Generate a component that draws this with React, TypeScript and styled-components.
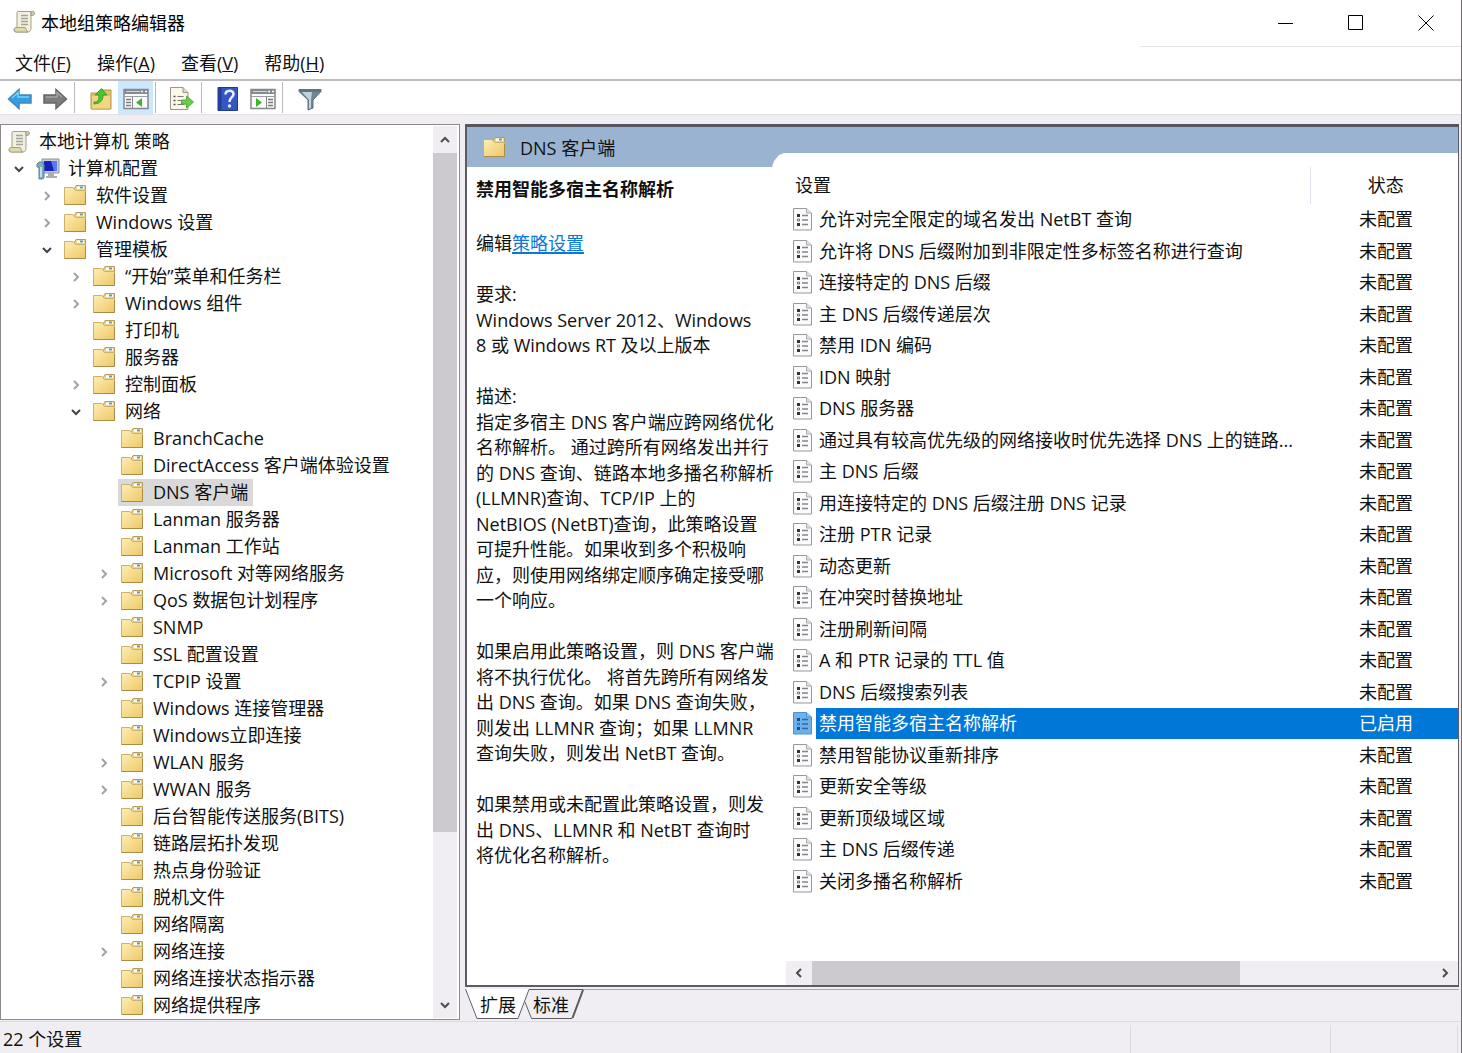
import React from 'react';
import styled, { createGlobalStyle, css } from 'styled-components';

const GlobalStyle = createGlobalStyle`
  * { box-sizing: border-box; }
  html, body { margin: 0; padding: 0; }
  body, button {
    font-family: "Open Sans", "Noto Sans CJK SC", sans-serif;
    font-size: 18px;
    color: #111;
  }
  button { background: none; border: 0; padding: 0; margin: 0; text-align: left; }
`;

const Window = styled.div`
  display: flex;
  flex-direction: column;
  height: 100vh;
  background: #f0eef2;
  border-right: 1px solid #6d6b70;
  overflow: hidden;
  white-space: nowrap;
`;

const TitleBar = styled.header`
  display: flex;
  flex: none;
  height: 47px;
  padding-left: 12px;
  background: #fff;
`;

const Title = styled.h1`
  display: flex;
  flex: 1;
  align-items: center;
  gap: 5px;
  height: 44px;
  margin: 0;
  font-size: 18px;
  font-weight: 400;
  color: #000;
`;

const WindowButtons = styled.div`
  display: flex;
  width: 321px;
  height: 47px;
  justify-content: flex-end;
  border-bottom: 1px solid #e6e6e8;
`;

const WindowButton = styled.button`
  display: flex;
  width: 70px;
  height: 45px;
  align-items: center;
  justify-content: center;
`;

const MenuBar = styled.nav`
  display: flex;
  flex: none;
  gap: 26px;
  height: 34px;
  padding-left: 15px;
  background: #fff;
  border-bottom: 2px solid #bdbdbf;
`;

const MenuItem = styled.button`
  line-height: 32px;
`;

const Toolbar = styled.div`
  display: flex;
  flex: none;
  align-items: center;
  height: 34px;
  padding-left: 2px;
  background: #fff;
  border-bottom: 1px solid #e2e2e4;
`;

const ToolButton = styled.button<{ $active?: boolean }>`
  display: flex;
  width: 35px;
  height: 33px;
  padding-top: 2px;
  align-items: center;
  justify-content: center;
  background: ${(p) => (p.$active ? '#cce8ff' : 'transparent')};
`;

const ToolSeparator = styled.span<{ $after?: number }>`
  width: 1px;
  height: 31px;
  margin: 0 ${(p) => p.$after ?? 8}px 0 2px;
  background: #b9b9bb;
`;

const Workspace = styled.main`
  display: flex;
  flex: 1;
  min-height: 0;
  gap: 5px;
  padding: 9px 2px 1px 0;
`;

const TreePane = styled.section`
  display: flex;
  flex: none;
  width: 460px;
  border: 1px solid #8b898e;
  background: #fff;
`;

const Tree = styled.ul`
  flex: 1;
  min-width: 0;
  margin: 0;
  padding: 3px 0 0;
  list-style: none;
  overflow: hidden;
`;

const indents = [3, 6, 34, 63, 91];

const TreeRow = styled.li<{ $level: number }>`
  display: flex;
  align-items: center;
  height: 27px;
  padding-left: ${(p) => indents[p.$level]}px;
`;

const Toggle = styled.button`
  display: flex;
  width: 24px;
  height: 27px;
  margin-right: 2px;
  align-items: center;
  justify-content: center;
`;

const ToggleSpace = styled.span`
  width: 26px;
`;

const TreeLabel = styled.button<{ $selected?: boolean }>`
  display: flex;
  align-items: center;
  gap: 8px;
  height: 27px;
  padding: 0 5px 0 3px;
  line-height: 27px;
  background: ${(p) => (p.$selected ? '#d9d9d9' : 'transparent')};
`;

const IconSlot = styled.span`
  display: flex;
  flex: none;
  width: 24px;
  align-items: center;
`;

const VScroll = styled.div`
  display: flex;
  flex-direction: column;
  width: 24px;
  margin: 1px 2px 1px 0;
  background: #f0eef2;
`;

const HScroll = styled.div`
  display: flex;
  flex: none;
  height: 24px;
  margin-left: 14px;
  background: #f0eef2;
`;

const ScrollButton = styled.button`
  display: flex;
  flex: none;
  width: 26px;
  height: 27px;
  align-items: center;
  justify-content: center;

  ${HScroll} & { height: 24px; }
  ${VScroll} & { width: 24px; }
`;

const Track = styled.div<{ $vertical?: boolean }>`
  display: flex;
  flex: 1;
  flex-direction: ${(p) => (p.$vertical ? 'column' : 'row')};
`;

const Thumb = styled.div<{ $share: number }>`
  flex: 0 0 ${(p) => p.$share}%;
  background: #cdcacf;
`;

const RightSide = styled.section`
  display: flex;
  flex: 1;
  flex-direction: column;
  min-width: 0;
`;

const DetailPane = styled.div`
  display: grid;
  flex: 1;
  min-height: 0;
  grid-template-columns: 305px minmax(0, 1fr);
  border: 2px solid #5d5b66;
  border-top: 3px solid #55555c;
  border-right-width: 1px;
  background: #fff;
`;

const Description = styled.article`
  min-width: 0;
`;

const PaneHeader = styled.header`
  display: flex;
  align-items: center;
  gap: 14px;
  height: 40px;
  padding-left: 16px;
  background: #99b3d1;
`;

const DescriptionBody = styled.div`
  padding: 9px 0 0 9px;
`;

const PolicyName = styled.h2`
  margin: 0 0 29px;
  font-size: 18px;
  line-height: 26px;
`;

const Lines = styled.p`
  margin: 0 0 26px;
  color: #111;
`;

const Line = styled.span`
  display: block;
  height: 25px;
  line-height: 25px;
  &:nth-child(even) { height: 26px; line-height: 26px; }
`;

const Link = styled.a`
  color: #0a78d7;
  text-decoration: underline;
  text-decoration-thickness: 2px;
  text-underline-offset: 2px;
`;

const ListSide = styled.div`
  display: flex;
  flex-direction: column;
  min-width: 0;
`;

const ListTop = styled.div`
  flex: none;
  height: 40px;
  border-top: 26px solid #99b3d1;
  line-height: 0;
`;

const TableArea = styled.div`
  flex: 1;
  min-height: 0;
  overflow: hidden;
`;

const Table = styled.table`
  width: 100%;
  table-layout: fixed;
  border-collapse: collapse;
`;

const HeadCell = styled.th<{ $status?: boolean }>`
  height: 37px;
  padding: 0 0 0 23px;
  font-weight: 400;
  line-height: 37px;
  text-align: left;
  ${(p) =>
    p.$status &&
    css`
      width: 148px;
      padding-left: 3px;
      text-align: center;
      border-left: 1px solid #e3e6f0;
    `}
`;

const rowText = css`
  height: 31px;
  padding: 0;
  line-height: 31px;
  tr:nth-child(even) > & { height: 32px; }
`;

const NameCell = styled.td`
  ${rowText}
  padding-left: 21px;
`;

const StatusCell = styled.td<{ $selected?: boolean }>`
  ${rowText}
  padding-left: 4px;
  text-align: center;
  color: ${(p) => (p.$selected ? '#fff' : '#111')};
  background: ${(p) => (p.$selected ? '#0078d7' : 'transparent')};
`;

const PolicyButton = styled.button<{ $selected?: boolean }>`
  display: flex;
  width: 100%;
  align-items: center;
  gap: 3px;
  line-height: 31px;
  color: ${(p) => (p.$selected ? '#fff' : '#111')};
`;

const PolicyText = styled.span<{ $selected?: boolean }>`
  flex: 1;
  min-width: 0;
  padding-left: 3px;
  overflow: hidden;
  background: ${(p) => (p.$selected ? '#0078d7' : 'transparent')};
`;

const Tabs = styled.div`
  display: flex;
  flex: none;
  height: 31px;
  margin-top: 2px;
  border-top: 1px solid #a9a7ac;
`;

const Tab = styled.button<{ $second?: boolean }>`
  position: relative;
  width: ${(p) => (p.$second ? 59 : 64)}px;
  height: 30px;
  margin-left: ${(p) => (p.$second ? -4 : 0)}px;
  line-height: 30px;
  padding-left: ${(p) => (p.$second ? 8 : 15)}px;
`;

const TabShape = styled.svg`
  position: absolute;
  top: -1px;
  left: 0;
`;

const TabText = styled.span`
  position: relative;
`;

const StatusBar = styled.footer`
  display: flex;
  flex: none;
  height: 32px;
  padding-right: 2px;
  border-top: 1px solid #dcdadf;
`;

const StatusText = styled.span`
  flex: 1;
  padding-left: 3px;
  line-height: 34px;
`;

const StatusPanel = styled.span<{ $width: number }>`
  width: ${(p) => p.$width}px;
  margin-top: 3px;
  border-left: 1px solid #dbd9de;
`;

const ScrollIcon = () => (
  <svg width="24" height="24" viewBox="0 0 24 24" aria-hidden="true">
    <path d="M6 1.5h13v16c0 3-1 4.500-3 4.500H4c-3 0-3-4.500 1-4.500V4c0-1.500 0-2.500 1-2.500z" fill="#f3f0de" stroke="#a19e8c" />
    <path d="M19 5.500V3c0-2.500 3.500-2 3.500.500 0 1.500-1.500 2-3.500 2z" fill="#cfcab0" stroke="#9a9784" />
    <path d="M2.500 18.500c0-1 1-1 2-1H13c1.500 0 1 4.500 3 4.500H4.500c-2 0-2-2-2-3.500z" fill="#e0d9ac" stroke="#a19e8c" />
    <path d="M9 5.500h7M9 8.500h7M9 11.500h7M9 14.500h7" stroke="#a3a39c" strokeWidth="1.5" />
  </svg>
);

const FolderIcon = () => (
  <svg width="23" height="21" viewBox="0 0 23 21" aria-hidden="true">
    <defs>
      <linearGradient id="folderFill" x1="0" y1="0" x2="1" y2="1">
        <stop offset="0" stopColor="#fdeeb5" />
        <stop offset="1" stopColor="#eec766" />
      </linearGradient>
    </defs>
    <path d="M10 4l2-3.5h9.5V19H10z" fill="#e9d591" stroke="#b99b53" />
    <path d="M13 1.5h7V4h-7z" fill="#fff" />
    <path d="M16 1.5h3v2h-3z" fill="#5d9cb2" />
    <path d="M.5 2.5H9l2.5 3h10v14H.5z" fill="url(#folderFill)" stroke="#cdb06a" />
    <path d="M.5 19.5h21V7" fill="none" stroke="#a98c48" />
  </svg>
);

const ComputerIcon = () => (
  <svg width="24" height="22" viewBox="0 0 24 22" aria-hidden="true">
    <path d="M6 1h17v14H6z" fill="#c8ccd4" stroke="#8d929c" />
    <path d="M8 3h13v10H8z" fill="#1420c4" />
    <path d="M15 3h6v10h-3z" fill="#5a78ec" />
    <path d="M12 15h6v3h3v2H10v-2h2z" fill="#a9adb5" />
    <path d="M1 6l2-2h4l1 3v13l-2 1H3V9H1z" fill="#7fa9bf" stroke="#5f7f92" />
    <path d="M5 9v10" stroke="#d7eef8" strokeWidth="1.5" />
  </svg>
);

const Chevron = ({ dir, color = '#4c4c4e' }: { dir: 'up' | 'down' | 'left' | 'right'; color?: string }) => {
  const paths = {
    up: 'M2 8l4-4 4 4',
    down: 'M2 4l4 4 4-4',
    left: 'M8 2L4 6l4 4',
    right: 'M4 2l4 4-4 4',
  };
  return (
    <svg width="12" height="12" viewBox="0 0 12 12" aria-hidden="true">
      <path d={paths[dir]} fill="none" stroke={color} strokeWidth="2" />
    </svg>
  );
};

const PolicyIcon = ({ selected }: { selected?: boolean }) => (
  <svg width="20" height="23" viewBox="0 0 20 23" aria-hidden="true">
    <path d="M.5 .5h13l5 4.5v17H.5z" fill={selected ? '#6db1ea' : '#fbfbfd'} stroke={selected ? '#4b92cf' : '#97979d'} />
    <path d="M13.5 .5V5h5" fill={selected ? '#8ec5f2' : '#e3e3e7'} stroke={selected ? '#4b92cf' : '#a9a9af'} />
    <path d="M4 6h3v3H4zM4 15h3v3H4z" fill={selected ? '#174f85' : '#333'} />
    <path d="M4.5 11h2v2h-2z" fill="none" stroke={selected ? '#2f74b3' : '#777'} />
    <path d="M9 7.5h6M9 12h6M9 16.5h6" stroke={selected ? '#2c6aa5' : '#85858c'} strokeWidth="1.5" />
  </svg>
);

const Arrow = ({ back }: { back?: boolean }) => (
  <svg width="26" height="22" viewBox="0 0 26 22" aria-hidden="true">
    <path
      d={back ? 'M1.5 11L12 1.5V7h12v8H12v5.5z' : 'M24.5 11L14 1.5V7H2v8h12v5.5z'}
      fill={back ? '#2f9fe6' : '#7d7d7f'}
      stroke={back ? '#3f88bb' : '#666'}
      strokeWidth="1.5"
    />
    <path d={back ? 'M5 10l6-5.5V9h11' : 'M4 9h11V4.5L20 9'} fill="none" stroke={back ? '#7fd0fa' : '#a4a4a6'} strokeWidth="1.5" />
  </svg>
);

const FolderUpIcon = () => (
  <svg width="24" height="24" viewBox="0 0 24 24" aria-hidden="true">
    <path d="M2 6h8l2-3h10v19H2z" fill="#e4c46b" stroke="#b3934a" />
    <path d="M2.5 8h19v14h-19z" fill="#f2d683" stroke="#c9ab5f" />
    <path d="M5 15c4 0 5-2 5-7H6l6.500-6.500L18 8h-4c0 6-3 8.500-9 9z" fill="#4dc52f" stroke="#3aa22c" />
  </svg>
);

const PaneIcon = ({ left }: { left?: boolean }) => (
  <svg width="26" height="22" viewBox="0 0 26 22" aria-hidden="true">
    <path d="M1 1.5h24v19H1z" fill="#fafafa" stroke="#85878b" strokeWidth="1.5" />
    <path d="M1 1h24v5H1z" fill="#858990" />
    <path d="M3 3.5h14" stroke="#d4d7da" />
    <path d="M18 3.5h2M22 3.5h2" stroke="#fff" strokeWidth="1.5" />
    <path d="M1 8.5h24" stroke="#9b9ea2" />
    <path d={left ? 'M9.5 9v12' : 'M16.5 9v12'} stroke="#85878b" />
    <path d={left ? 'M3 11.5h5M3 14.5h5M3 17.5h5' : 'M18 11.5h5M18 14.5h5M18 17.5h5'} stroke="#777a80" strokeWidth="1.5" />
    <path d={left ? 'M19 10v9l-6-4.500z' : 'M6 10v9l6-4.500z'} fill="#3fb32c" />
  </svg>
);

const ExportIcon = () => (
  <svg width="26" height="24" viewBox="0 0 26 24" aria-hidden="true">
    <path d="M1.5 .5H14l5 5v17H1.5z" fill="#fbf8e8" stroke="#9a9789" />
    <path d="M14 .5v5h5" fill="#ddd9c5" stroke="#9a9789" />
    <path d="M4.5 9.5h2M4.5 13.5h2M4.5 17.5h2" stroke="#555" strokeWidth="1.5" />
    <path d="M8.5 9.5h6M8.5 13.5h4M8.5 17.5h7" stroke="#777" />
    <path d="M12.5 13h5V9l7 6-7 6v-4h-5z" fill="#6bcb4b" stroke="#4fae3a" />
  </svg>
);

const HelpIcon = () => (
  <svg width="22" height="26" viewBox="0 0 22 26" aria-hidden="true">
    <path d="M1 1.5h19.5v23H1z" fill="#3557c4" stroke="#22397f" />
    <path d="M1 1.5h3.5v23H1z" fill="#233f9e" />
    <path d="M8.5 8.5c0-5 8-5 8-.5 0 3.500-4 3.500-4 8" fill="none" stroke="#e9eefc" strokeWidth="2.5" />
    <circle cx="12.5" cy="20" r="1.7" fill="#e9eefc" />
  </svg>
);

const FilterIcon = () => (
  <svg width="26" height="24" viewBox="0 0 26 24" aria-hidden="true">
    <path d="M2 2.5h22v2L16 13v8l-5 2V13L2 4.5z" fill="#6d8797" stroke="#5b6f7c" />
    <path d="M5 5h10l-1 8v8l-2 1v-9z" fill="#c3d3dc" />
    <path d="M2 2h22v3H2z" fill="#5e7482" />
  </svg>
);

type Node = { level: number; text: string; state?: 'open' | 'closed'; selected?: boolean };

const tree: Node[] = [
  { level: 1, text: '计算机配置', state: 'open' },
  { level: 2, text: '软件设置', state: 'closed' },
  { level: 2, text: 'Windows 设置', state: 'closed' },
  { level: 2, text: '管理模板', state: 'open' },
  { level: 3, text: '“开始”菜单和任务栏', state: 'closed' },
  { level: 3, text: 'Windows 组件', state: 'closed' },
  { level: 3, text: '打印机' },
  { level: 3, text: '服务器' },
  { level: 3, text: '控制面板', state: 'closed' },
  { level: 3, text: '网络', state: 'open' },
  { level: 4, text: 'BranchCache' },
  { level: 4, text: 'DirectAccess 客户端体验设置' },
  { level: 4, text: 'DNS 客户端', selected: true },
  { level: 4, text: 'Lanman 服务器' },
  { level: 4, text: 'Lanman 工作站' },
  { level: 4, text: 'Microsoft 对等网络服务', state: 'closed' },
  { level: 4, text: 'QoS 数据包计划程序', state: 'closed' },
  { level: 4, text: 'SNMP' },
  { level: 4, text: 'SSL 配置设置' },
  { level: 4, text: 'TCPIP 设置', state: 'closed' },
  { level: 4, text: 'Windows 连接管理器' },
  { level: 4, text: 'Windows立即连接' },
  { level: 4, text: 'WLAN 服务', state: 'closed' },
  { level: 4, text: 'WWAN 服务', state: 'closed' },
  { level: 4, text: '后台智能传送服务(BITS)' },
  { level: 4, text: '链路层拓扑发现' },
  { level: 4, text: '热点身份验证' },
  { level: 4, text: '脱机文件' },
  { level: 4, text: '网络隔离' },
  { level: 4, text: '网络连接', state: 'closed' },
  { level: 4, text: '网络连接状态指示器' },
  { level: 4, text: '网络提供程序' },
];

const policies = [
  '允许对完全限定的域名发出 NetBT 查询',
  '允许将 DNS 后缀附加到非限定性多标签名称进行查询',
  '连接特定的 DNS 后缀',
  '主 DNS 后缀传递层次',
  '禁用 IDN 编码',
  'IDN 映射',
  'DNS 服务器',
  '通过具有较高优先级的网络接收时优先选择 DNS 上的链路...',
  '主 DNS 后缀',
  '用连接特定的 DNS 后缀注册 DNS 记录',
  '注册 PTR 记录',
  '动态更新',
  '在冲突时替换地址',
  '注册刷新间隔',
  'A 和 PTR 记录的 TTL 值',
  'DNS 后缀搜索列表',
  '禁用智能多宿主名称解析',
  '禁用智能协议重新排序',
  '更新安全等级',
  '更新顶级域区域',
  '主 DNS 后缀传递',
  '关闭多播名称解析',
];
const selectedPolicy = '禁用智能多宿主名称解析';

const paragraphs = [
  ['要求:', 'Windows Server 2012、Windows', '8 或 Windows RT 及以上版本'],
  [
    '描述:',
    '指定多宿主 DNS 客户端应跨网络优化',
    '名称解析。 通过跨所有网络发出并行',
    '的 DNS 查询、链路本地多播名称解析',
    '(LLMNR)查询、TCP/IP 上的',
    'NetBIOS (NetBT)查询，此策略设置',
    '可提升性能。如果收到多个积极响',
    '应，则使用网络绑定顺序确定接受哪',
    '一个响应。',
  ],
  [
    '如果启用此策略设置，则 DNS 客户端',
    '将不执行优化。 将首先跨所有网络发',
    '出 DNS 查询。如果 DNS 查询失败，',
    '则发出 LLMNR 查询；如果 LLMNR',
    '查询失败，则发出 NetBT 查询。',
  ],
  ['如果禁用或未配置此策略设置，则发', '出 DNS、LLMNR 和 NetBT 查询时', '将优化名称解析。'],
];

const menus = [
  ['文件', 'F'],
  ['操作', 'A'],
  ['查看', 'V'],
  ['帮助', 'H'],
];

export default function App() {
  return (
    <>
      <GlobalStyle />
      <Window lang="zh-CN">
        <TitleBar>
          <Title>
            <ScrollIcon />
            本地组策略编辑器
          </Title>
          <WindowButtons>
            <WindowButton aria-label="最小化">
              <svg width="16" height="16"><path d="M0 8.5h15" stroke="#000" /></svg>
            </WindowButton>
            <WindowButton aria-label="最大化">
              <svg width="16" height="16"><path d="M.5 .5h14v14H.5z" fill="none" stroke="#000" /></svg>
            </WindowButton>
            <WindowButton aria-label="关闭">
              <svg width="16" height="16"><path d="M.5 .5l15 15M15.5 .5l-15 15" stroke="#000" /></svg>
            </WindowButton>
          </WindowButtons>
        </TitleBar>
        <MenuBar>
          {menus.map(([name, key]) => (
            <MenuItem key={key}>
              {name}(<u>{key}</u>)
            </MenuItem>
          ))}
        </MenuBar>
        <Toolbar>
          <ToolButton aria-label="后退"><Arrow back /></ToolButton>
          <ToolButton aria-label="前进"><Arrow /></ToolButton>
          <ToolSeparator />
          <ToolButton aria-label="上一级"><FolderUpIcon /></ToolButton>
          <ToolButton $active aria-label="显示控制台树"><PaneIcon left /></ToolButton>
          <ToolSeparator />
          <ToolButton aria-label="导出列表"><ExportIcon /></ToolButton>
          <ToolSeparator />
          <ToolButton aria-label="帮助"><HelpIcon /></ToolButton>
          <ToolButton aria-label="显示操作窗格"><PaneIcon /></ToolButton>
          <ToolSeparator $after={9} />
          <ToolButton aria-label="筛选器"><FilterIcon /></ToolButton>
        </Toolbar>

        <Workspace>
          <TreePane>
            <Tree>
              <TreeRow $level={0}>
                <TreeLabel>
                  <IconSlot><ScrollIcon /></IconSlot>
                  本地计算机 策略
                </TreeLabel>
              </TreeRow>
              {tree.map((node) => (
                <TreeRow key={node.text} $level={node.level}>
                  {node.state ? (
                    <Toggle aria-label={node.state === 'open' ? '折叠' : '展开'}>
                      <Chevron
                        dir={node.state === 'open' ? 'down' : 'right'}
                        color={node.state === 'open' ? '#444' : '#a3a3a5'}
                      />
                    </Toggle>
                  ) : (
                    <ToggleSpace />
                  )}
                  <TreeLabel $selected={node.selected}>
                    <IconSlot>{node.level === 1 ? <ComputerIcon /> : <FolderIcon />}</IconSlot>
                    {node.text}
                  </TreeLabel>
                </TreeRow>
              ))}
            </Tree>
            <VScroll>
              <ScrollButton aria-label="向上滚动"><Chevron dir="up" /></ScrollButton>
              <Track $vertical><Thumb $share={81} /></Track>
              <ScrollButton aria-label="向下滚动"><Chevron dir="down" /></ScrollButton>
            </VScroll>
          </TreePane>

          <RightSide>
            <DetailPane>
              <Description>
                <PaneHeader>
                  <FolderIcon />
                  DNS 客户端
                </PaneHeader>
                <DescriptionBody>
                  <PolicyName>{selectedPolicy}</PolicyName>
                  <Lines>
                    <Line>编辑<Link href="#policy">策略设置</Link></Line>
                  </Lines>
                  {paragraphs.map((lines) => (
                    <Lines key={lines[0]}>
                      {lines.map((line) => (
                        <Line key={line}>{line}</Line>
                      ))}
                    </Lines>
                  ))}
                </DescriptionBody>
              </Description>
              <ListSide>
                <ListTop>
                  <svg width="12" height="14" viewBox="0 0 12 14" aria-hidden="true">
                    <path d="M0 0h12L7 2 2 8 0 14z" fill="#99b3d1" />
                  </svg>
                </ListTop>
                <TableArea>
                  <Table>
                    <thead>
                      <tr>
                        <HeadCell>设置</HeadCell>
                        <HeadCell $status>状态</HeadCell>
                      </tr>
                    </thead>
                    <tbody>
                      {policies.map((name) => {
                        const selected = name === selectedPolicy;
                        return (
                          <tr key={name}>
                            <NameCell>
                              <PolicyButton $selected={selected}>
                                <PolicyIcon selected={selected} />
                                <PolicyText $selected={selected}>{name}</PolicyText>
                              </PolicyButton>
                            </NameCell>
                            <StatusCell $selected={selected}>{selected ? '已启用' : '未配置'}</StatusCell>
                          </tr>
                        );
                      })}
                    </tbody>
                  </Table>
                </TableArea>
                <HScroll>
                  <ScrollButton aria-label="向左滚动"><Chevron dir="left" /></ScrollButton>
                  <Track><Thumb $share={69} /></Track>
                  <ScrollButton aria-label="向右滚动"><Chevron dir="right" /></ScrollButton>
                </HScroll>
              </ListSide>
            </DetailPane>
            <Tabs>
              <Tab>
                <TabShape width="64" height="31" viewBox="0 0 64 31" aria-hidden="true">
                  <path d="M0 0l12 29.5h41L64 0z" fill="#fff" />
                  <path d="M.5 0L12 29.5h41L64 .5" fill="none" stroke="#5f5d63" />
                </TabShape>
                <TabText>扩展</TabText>
              </Tab>
              <Tab $second>
                <TabShape width="59" height="31" viewBox="0 0 59 31" aria-hidden="true">
                  <path d="M0 13l6.5 16.5H47L58 .5H4" fill="none" stroke="#5f5d63" />
                  <path d="M47.5 29L58 1" stroke="#5f5d63" strokeWidth="2" />
                </TabShape>
                <TabText>标准</TabText>
              </Tab>
            </Tabs>
          </RightSide>
        </Workspace>

        <StatusBar>
          <StatusText>22 个设置</StatusText>
          <StatusPanel $width={200} />
          <StatusPanel $width={127} />
          <StatusPanel $width={2} />
        </StatusBar>
      </Window>
    </>
  );
}
